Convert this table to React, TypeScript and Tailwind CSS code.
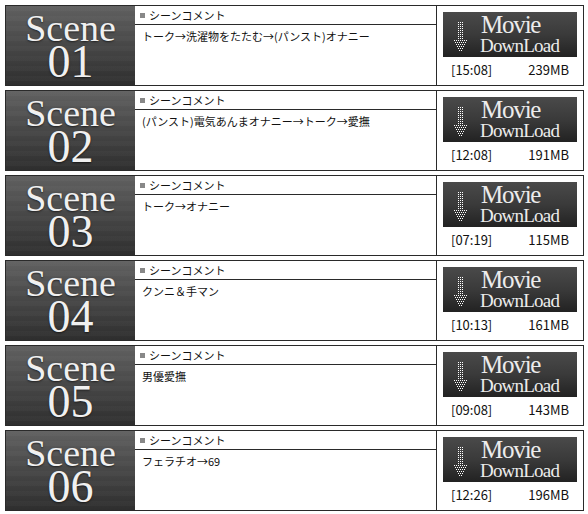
import React from 'react';

type Scene = { no: string; comment: string; time: string; size: string };

const scenes: Scene[] = [
  { no: '01', comment: 'トーク→洗濯物をたたむ→(パンスト)オナニー', time: '[15:08]', size: '239MB' },
  { no: '02', comment: '(パンスト)電気あんまオナニー→トーク→愛撫', time: '[12:08]', size: '191MB' },
  { no: '03', comment: 'トーク→オナニー', time: '[07:19]', size: '115MB' },
  { no: '04', comment: 'クンニ＆手マン', time: '[10:13]', size: '161MB' },
  { no: '05', comment: '男優愛撫', time: '[09:08]', size: '143MB' },
  { no: '06', comment: 'フェラチオ→69', time: '[12:26]', size: '196MB' },
];

const jp = "font-['MS_PGothic','Noto_Sans_CJK_JP',sans-serif]";
const serif = "font-['Liberation_Serif','Noto_Serif',serif]";

// dotted down arrow on the download button
function DotArrow() {
  const dots: React.ReactElement[] = [];
  for (let y = 0; y < 18; y += 2) {
    for (let x = 4; x <= 8; x += 2) {
      dots.push(<rect key={`${x}-${y}`} x={x} y={y} width={1} height={1} fill="#fff" />);
    }
  }
  const head = [
    [0, 18, 13], [1, 20, 11], [2, 22, 9], [3, 24, 7], [4, 26, 5], [5, 28, 3],
  ];
  head.forEach(([i, y, w]) => {
    const x0 = (13 - w) / 2;
    for (let x = x0; x < x0 + w; x += 2) {
      dots.push(<rect key={`h${i}-${x}`} x={x} y={y} width={1} height={1} fill="#fff" />);
    }
  });
  return (
    <svg width="13" height="30" viewBox="0 0 13 30" className="shrink-0">
      {dots}
    </svg>
  );
}

function SceneRow({ scene }: { scene: Scene }) {
  return (
    <div className="flex h-[81px] w-[579px] border border-[#2a2a2a] bg-white">
      {/* Scene label */}
      <div className="flex w-[129px] shrink-0 flex-col items-center bg-[repeating-linear-gradient(to_bottom,rgba(255,255,255,0.025)_0px,rgba(255,255,255,0.025)_5px,transparent_5px,transparent_10px),linear-gradient(to_bottom,#606060,#2e2e2e)]">
        <div className={`${serif} mt-[3px] h-[38px] text-[38px] leading-[38px] text-[#f0f0f0] [text-shadow:0_1px_2px_rgba(0,0,0,0.6)]`}>
          Scene
        </div>
        <div className={`${serif} h-[36px] text-[46px] leading-[30px] text-[#f0f0f0] [text-shadow:0_1px_2px_rgba(0,0,0,0.6)]`}>
          {scene.no}
        </div>
      </div>

      {/* Comment */}
      <div className="flex w-[302px] shrink-0 flex-col border-r border-[#2a2a2a]">
        <div className={`${jp} flex h-[19px] items-center gap-[4px] border-b border-[#2a2a2a] pl-[5px] text-[11px] text-[#111]`}>
          <span className="inline-block h-[5px] w-[5px] bg-[#888]" />
          シーンコメント
        </div>
        <div className={`${jp} pl-[7px] pt-[4px] text-[11px] leading-[14px] text-[#111]`}>
          {scene.comment}
        </div>
      </div>

      {/* Download */}
      <div className="flex flex-1 flex-col">
        <div className="mx-[6px] mt-[6px] flex h-[45px] items-center bg-[linear-gradient(to_bottom,#4a4a4a,#3a3a3a_50%,#222)]">
          <div className="ml-[11px] mt-[4px]">
            <DotArrow />
          </div>
          <div className={`${serif} ml-[13px] flex flex-col text-[#ececec]`}>
            <span className="pl-[1px] text-[25px] leading-[22px] tracking-[-1.2px]">Movie</span>
            <span className="text-[19px] leading-[19px] tracking-[-0.8px]">DownLoad</span>
          </div>
        </div>
        <div className={`${jp} mt-[6px] flex justify-between pl-[14px] pr-[14px] text-[13px] leading-[14px] text-[#111]`}>
          <span>{scene.time}</span>
          <span>{scene.size}</span>
        </div>
      </div>
    </div>
  );
}

export default function App() {
  return (
    <div className="h-[514px] w-[588px] bg-white pl-[5px] pt-[5px]">
      <div className="flex flex-col gap-[4px]">
        {scenes.map((s) => (
          <SceneRow key={s.no} scene={s} />
        ))}
      </div>
    </div>
  );
}
